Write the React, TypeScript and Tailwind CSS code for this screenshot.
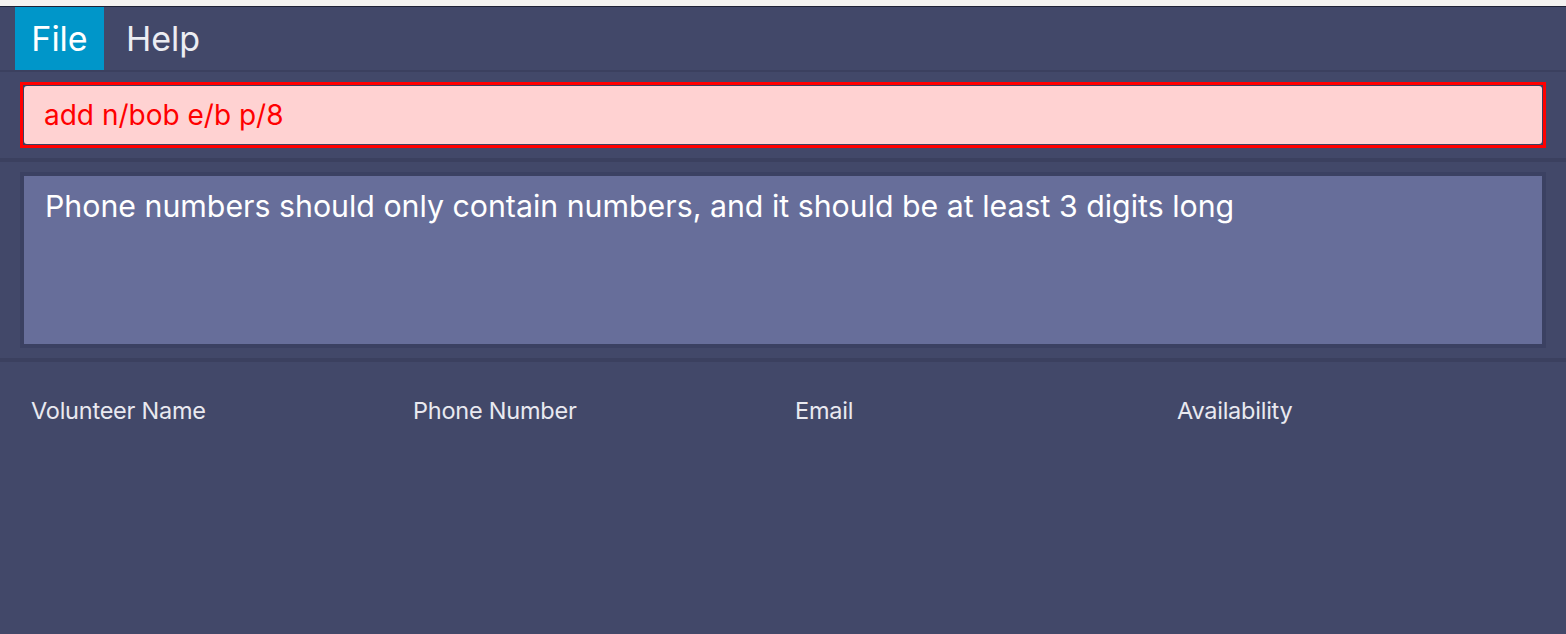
import React from 'react';

const columns = ['Volunteer Name', 'Phone Number', 'Email', 'Availability'];

export default function App() {
  return (
    <div className="flex h-[634px] w-full flex-col overflow-hidden bg-[#424869] font-['Inter',sans-serif]">
      <div className="h-[6px] bg-[#f4f3f1]" />
      <div className="h-px bg-[#1e2136]" />

      {/* menu bar */}
      <div className="flex h-[63px] items-stretch pl-[15px]">
        <div className="flex w-[89px] items-center justify-center bg-[#0096c9] text-[34px] text-white">File</div>
        <div className="flex items-center px-[22px] text-[34px] text-[#ecedf2]">Help</div>
      </div>
      <div className="h-[2px] bg-[#3b405f]" />

      {/* command box */}
      <div className="px-[20px] py-[10px]">
        <div className="h-[66px] border-[3px] border-[#ff0000] bg-[#3b405f] p-px">
          <div className="flex h-full items-center rounded-[3px] bg-[#ffd2d2] pl-[20px] text-[28px] text-[#ff0000]">
            add n/bob e/b p/8
          </div>
        </div>
      </div>
      <div className="h-[4px] bg-[#3b405f]" />

      {/* result display */}
      <div className="px-[20px] py-[10px]">
        <div className="h-[176px] border-4 border-[#3b4162] bg-[#676e9a] px-[21px] pt-[10px] text-[30.3px] leading-[40px] text-white">
          Phone numbers should only contain numbers, and it should be at least 3 digits long
        </div>
      </div>
      <div className="h-[4px] bg-[#3b405f]" />

      {/* volunteer table */}
      <div className="grid grid-cols-[repeat(4,382px)] pl-[31px] pt-[31px]">
        {columns.map((col) => (
          <div key={col} className="text-[23.5px] tracking-[-0.01em] text-[#e9e9f0]">
            {col}
          </div>
        ))}
      </div>
    </div>
  );
}
